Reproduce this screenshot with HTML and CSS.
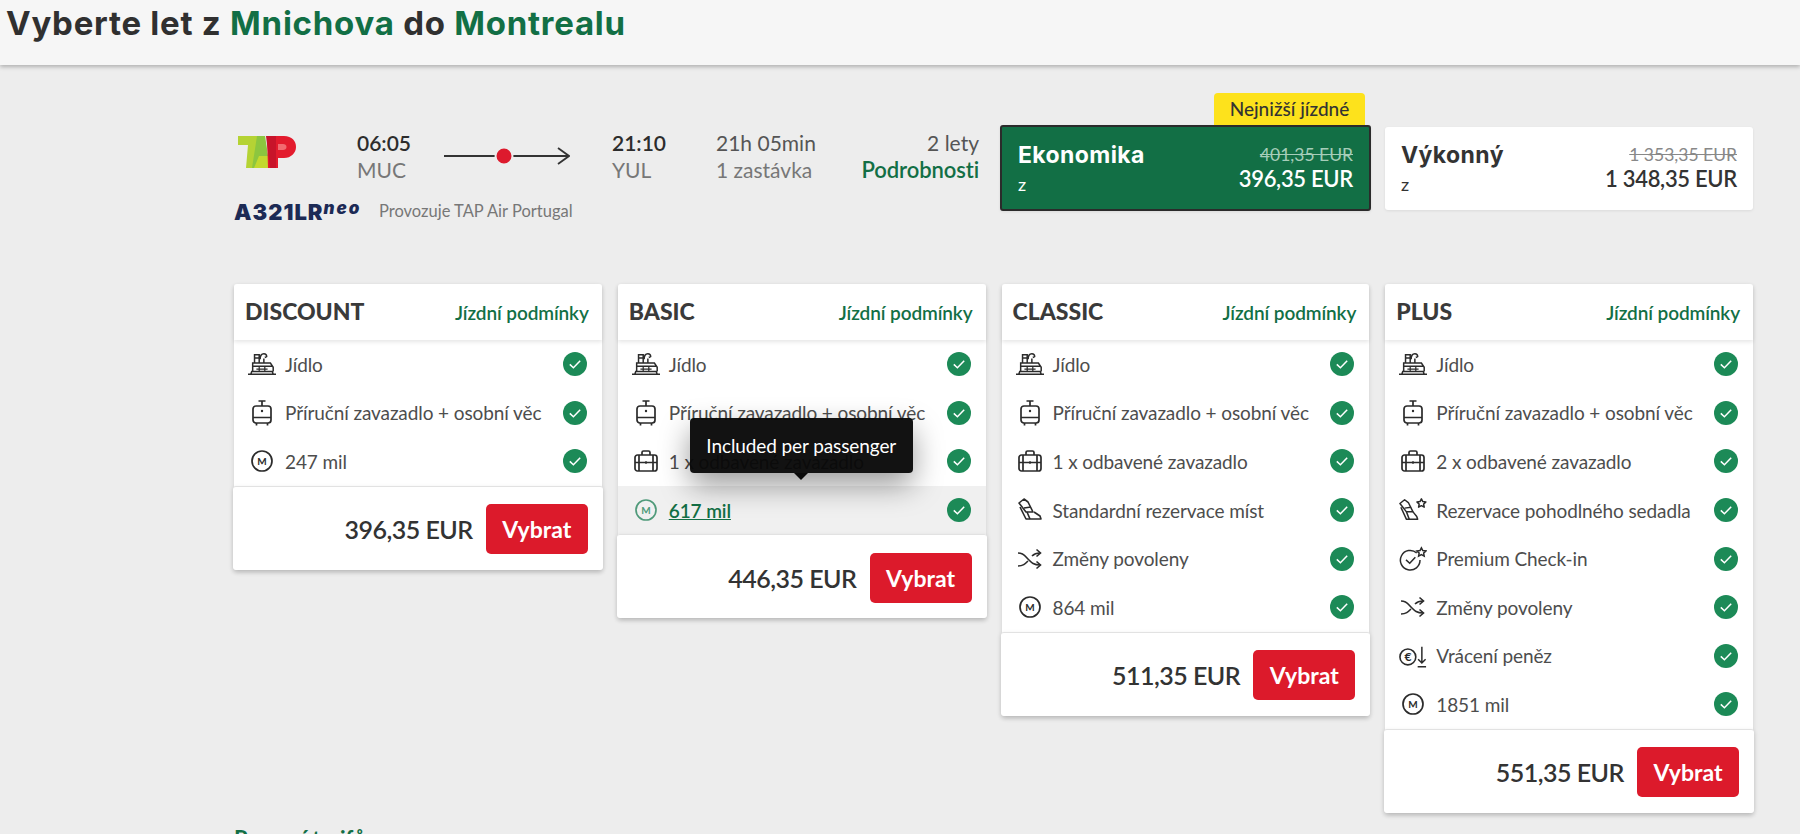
FILE: index.html
```html
<!DOCTYPE html>
<html lang="cs">
<head>
  <meta charset="UTF-8">
  <meta name="viewport" content="width=device-width, initial-scale=1.0">
  <title>Vyberte let</title>
  <link rel="stylesheet" href="styles.css">
</head>
<body>

  <!-- Ikony -->
  <svg class="sprite" xmlns="http://www.w3.org/2000/svg">
    <symbol id="i-check" viewBox="0 0 24 24">
      <circle cx="12" cy="12" r="12" fill="#1c8a57"/>
      <path d="M6.8 12.4l3.6 3.4 6.8-7" fill="none" stroke="#fff" stroke-width="1.5"/>
    </symbol>
    <symbol id="i-meal" viewBox="0 0 30 28">
      <g fill="none" stroke="currentColor" stroke-width="1.6">
        <path d="M0 25h30M3 25l1-3h22l1 3M5 22v-9h19l3 4.5V22M5 16.5h21"/>
        <path d="M7 13V4h5v9M7 7.5h5M13 9c0-3 1-6 4-6 2 0 3 1 3 3l-2 1M17 13V8"/>
        <path d="M9 19.5h12M12 17v5M18 17v5" stroke-width="1.3"/>
      </g>
    </symbol>
    <symbol id="i-trolley" viewBox="0 0 28 28">
      <g fill="none" stroke="currentColor" stroke-width="1.7">
        <path d="M10.5 2h7M14 2v5"/>
        <rect x="5" y="7" width="18" height="17" rx="3"/>
        <path d="M5 18.5h18M8.5 24v2.5M19.5 24v2.5"/>
      </g>
      <circle cx="14" cy="12" r="1.2" fill="currentColor"/>
    </symbol>
    <symbol id="i-bag" viewBox="0 0 28 28">
      <g fill="none" stroke="currentColor" stroke-width="1.7">
        <rect x="3" y="8" width="22" height="16" rx="2.5"/>
        <path d="M10 8V5.5A1.5 1.5 0 0 1 11.5 4h5A1.5 1.5 0 0 1 18 5.5V8M7 8v16M21 8v16M3 15.5h22"/>
      </g>
      <circle cx="14" cy="15.5" r="1.2" fill="currentColor"/>
    </symbol>
    <symbol id="i-miles" viewBox="0 0 28 28">
      <circle cx="14" cy="14" r="10" fill="none" stroke="currentColor" stroke-width="1.7"/>
      <text x="14" y="17.5" text-anchor="middle" class="icon-letter">M</text>
    </symbol>
    <symbol id="i-seat" viewBox="0 0 28 28">
      <g fill="none" stroke="currentColor" stroke-width="1.6" stroke-linejoin="round">
        <path d="M3 7l5-4 4 3 5 10h-7z"/>
        <path d="M4 11l6 12h15l-1-3-6-4"/>
        <path d="M11 16l3 7M8 12l7-1"/>
      </g>
    </symbol>
    <symbol id="i-shuffle" viewBox="0 0 28 28">
      <g fill="none" stroke="currentColor" stroke-width="1.6">
        <path d="M2 8c6 0 7 3 10 6s5 6 12 6M2 21c5 0 7-2 10-5M16 11c2-2 4-3 8-3"/>
        <path d="M20.5 4.5L24.5 8l-4 3.5M20.5 16.5l4 3.5-4 3.5"/>
      </g>
    </symbol>
    <symbol id="i-seat-star" viewBox="0 0 30 28">
      <g fill="none" stroke="currentColor" stroke-width="1.6" stroke-linejoin="round">
        <path d="M1 7l5-4 4 3 5 10H8z"/>
        <path d="M2 11l6 13h12l-1-3-4-5"/>
        <path d="M8 16l3 8M6 12l7-1"/>
        <path d="M24 2l1.5 3 3.3.4-2.4 2.3.6 3.3-3-1.6-3 1.6.6-3.3-2.4-2.3 3.3-.4z"/>
      </g>
    </symbol>
    <symbol id="i-checkin" viewBox="0 0 30 28">
      <g fill="none" stroke="currentColor" stroke-width="1.6">
        <path d="M19 7.5A10.5 10.5 0 1 0 22.5 15"/>
        <path d="M7.5 15l4 3.5 6-6.5"/>
        <path d="M24 2l1.5 3 3.3.4-2.4 2.3.6 3.3-3-1.6-3 1.6.6-3.3-2.4-2.3 3.3-.4z"/>
      </g>
    </symbol>
    <symbol id="i-refund" viewBox="0 0 30 28">
      <circle cx="9.5" cy="15" r="8.5" fill="none" stroke="currentColor" stroke-width="1.7"/>
      <text x="9.5" y="19.5" text-anchor="middle" class="icon-letter-big">€</text>
      <path d="M24.5 4v17.5M20.5 17.5l4 4 4-4M20 25.5h9" fill="none" stroke="currentColor" stroke-width="1.6"/>
    </symbol>
  </svg>

  <header class="page-head">
    <h1>Vyberte let z <span>Mnichova</span> do <span>Montrealu</span></h1>
  </header>

  <main class="content">

    <!-- Radek s letem -->
    <section class="flight">
      <div class="flight-info">
        <div class="flight-top">
          <div class="flight-logo">
            <svg width="58" height="33" viewBox="0 0 58 33" aria-label="TAP">
              <path d="M0 0h27v9h-8l-2 23H8l2-23H0z" fill="#b5d334"/>
              <path d="M19 0h8l5 32H14z" fill="#8cc63f"/>
              <path d="M21 20h9l2 12H16z" fill="#c3d92f"/>
              <path d="M29 0h17c8 0 12 5 12 11s-5 11-12 11h-6v10H30z" fill="#e31b2d"/>
              <path d="M28 0h10v32h-6z" fill="#c8142a"/>
              <path d="M40 8h5c2 0 3.5 1.2 3.5 3s-1.5 3-3.5 3h-5z" fill="#f26a70"/>
            </svg>
          </div>
          <div class="time-cell">
            <strong>06:05</strong>
            <span>MUC</span>
          </div>
          <div class="route">
            <svg width="126" height="20" viewBox="0 0 126 20">
              <path d="M0 10h125M114 2l11 8-11 8" fill="none" stroke="#333" stroke-width="1.8"/>
              <circle cx="60" cy="10" r="8.5" fill="#dd1a2d" stroke="#ededed" stroke-width="2"/>
            </svg>
          </div>
          <div class="time-cell arrival">
            <strong>21:10</strong>
            <span>YUL</span>
          </div>
          <div class="duration">
            <div>21h 05min</div>
            <span>1 zastávka</span>
          </div>
          <div class="stops">
            <div>2 lety</div>
            <a href="#">Podrobnosti</a>
          </div>
        </div>
        <div class="flight-bottom">
          <span class="aircraft">A321LR<em>neo</em></span>
          <span class="operator">Provozuje TAP Air Portugal</span>
        </div>
      </div>

      <div class="cabin cabin-active">
        <div class="cabin-tag">Nejnižší jízdné</div>
        <div>
          <div class="cabin-name">Ekonomika</div>
          <div class="cabin-from">z</div>
        </div>
        <div class="cabin-price">
          <s>401,35 EUR</s>
          <div>396,35 EUR</div>
        </div>
      </div>

      <div class="cabin">
        <div>
          <div class="cabin-name">Výkonný</div>
          <div class="cabin-from">z</div>
        </div>
        <div class="cabin-price">
          <s>1 353,35 EUR</s>
          <div>1 348,35 EUR</div>
        </div>
      </div>
    </section>

    <!-- Tarify -->
    <section class="fares">

      <article class="fare">
        <div class="fare-head"><h3>DISCOUNT</h3><a href="#">Jízdní podmínky</a></div>
        <ul class="fare-list">
          <li><svg class="ico"><use href="#i-meal"/></svg>Jídlo<svg class="ok"><use href="#i-check"/></svg></li>
          <li><svg class="ico"><use href="#i-trolley"/></svg>Příruční zavazadlo + osobní věc<svg class="ok"><use href="#i-check"/></svg></li>
          <li><svg class="ico"><use href="#i-miles"/></svg>247 mil<svg class="ok"><use href="#i-check"/></svg></li>
        </ul>
        <div class="fare-foot"><span>396,35 EUR</span><button class="pick">Vybrat</button></div>
      </article>

      <article class="fare">
        <div class="fare-head"><h3>BASIC</h3><a href="#">Jízdní podmínky</a></div>
        <ul class="fare-list">
          <li><svg class="ico"><use href="#i-meal"/></svg>Jídlo<svg class="ok"><use href="#i-check"/></svg></li>
          <li><svg class="ico"><use href="#i-trolley"/></svg>Příruční zavazadlo + osobní věc<svg class="ok"><use href="#i-check"/></svg></li>
          <li><svg class="ico"><use href="#i-bag"/></svg>1 x odbavené zavazadlo<svg class="ok"><use href="#i-check"/></svg></li>
          <li class="hovered">
            <div class="tooltip">Included per passenger</div>
            <svg class="ico"><use href="#i-miles"/></svg><a href="#">617 mil</a><svg class="ok"><use href="#i-check"/></svg>
          </li>
        </ul>
        <div class="fare-foot"><span>446,35 EUR</span><button class="pick">Vybrat</button></div>
      </article>

      <article class="fare">
        <div class="fare-head"><h3>CLASSIC</h3><a href="#">Jízdní podmínky</a></div>
        <ul class="fare-list">
          <li><svg class="ico"><use href="#i-meal"/></svg>Jídlo<svg class="ok"><use href="#i-check"/></svg></li>
          <li><svg class="ico"><use href="#i-trolley"/></svg>Příruční zavazadlo + osobní věc<svg class="ok"><use href="#i-check"/></svg></li>
          <li><svg class="ico"><use href="#i-bag"/></svg>1 x odbavené zavazadlo<svg class="ok"><use href="#i-check"/></svg></li>
          <li><svg class="ico"><use href="#i-seat"/></svg>Standardní rezervace míst<svg class="ok"><use href="#i-check"/></svg></li>
          <li><svg class="ico"><use href="#i-shuffle"/></svg>Změny povoleny<svg class="ok"><use href="#i-check"/></svg></li>
          <li><svg class="ico"><use href="#i-miles"/></svg>864 mil<svg class="ok"><use href="#i-check"/></svg></li>
        </ul>
        <div class="fare-foot"><span>511,35 EUR</span><button class="pick">Vybrat</button></div>
      </article>

      <article class="fare">
        <div class="fare-head"><h3>PLUS</h3><a href="#">Jízdní podmínky</a></div>
        <ul class="fare-list">
          <li><svg class="ico"><use href="#i-meal"/></svg>Jídlo<svg class="ok"><use href="#i-check"/></svg></li>
          <li><svg class="ico"><use href="#i-trolley"/></svg>Příruční zavazadlo + osobní věc<svg class="ok"><use href="#i-check"/></svg></li>
          <li><svg class="ico"><use href="#i-bag"/></svg>2 x odbavené zavazadlo<svg class="ok"><use href="#i-check"/></svg></li>
          <li><svg class="ico"><use href="#i-seat-star"/></svg>Rezervace pohodlného sedadla<svg class="ok"><use href="#i-check"/></svg></li>
          <li><svg class="ico"><use href="#i-checkin"/></svg>Premium Check-in<svg class="ok"><use href="#i-check"/></svg></li>
          <li><svg class="ico"><use href="#i-shuffle"/></svg>Změny povoleny<svg class="ok"><use href="#i-check"/></svg></li>
          <li><svg class="ico"><use href="#i-refund"/></svg>Vrácení peněz<svg class="ok"><use href="#i-check"/></svg></li>
          <li><svg class="ico"><use href="#i-miles"/></svg>1851 mil<svg class="ok"><use href="#i-check"/></svg></li>
        </ul>
        <div class="fare-foot"><span>551,35 EUR</span><button class="pick">Vybrat</button></div>
      </article>

    </section>

    <div class="next-link"><a href="#">Pomocí tarifů</a></div>
  </main>

</body>
</html>
```

FILE: styles.css
```css
/* Estilo geral */
html, body {
  height: 100%;
  overflow: hidden;
}

body {
  margin: 0;
  background-color: #ededed;
  font-family: "Lato", Arial, sans-serif;
  color: #333;
}

a {
  color: #126f45;
  text-decoration: none;
}

.sprite {
  display: none;
}

.icon-letter {
  font-family: "Lato", sans-serif;
  font-size: 10px;
  font-weight: 700;
  fill: currentColor;
}

.icon-letter-big {
  font-family: "Lato", sans-serif;
  font-size: 13px;
  font-weight: 700;
  fill: currentColor;
}

/* Cabecalho */
.page-head {
  height: 65px;
  background-color: #f6f6f6;
  box-shadow: 0 2px 4px rgba(0, 0, 0, 0.25);
  padding-left: 6px;
}

.page-head h1 {
  margin: 0;
  padding-top: 3px;
  font-family: "Inter", Arial, sans-serif;
  font-size: 33px;
  line-height: 40px;
  font-weight: 700;
  letter-spacing: 0.75px;
  color: #303030;
}

.page-head h1 span {
  color: #126f45;
}

.content {
  padding: 60px 47px 0 234px;
}

/* Linha do voo */
.flight {
  display: flex;
  align-items: flex-start;
  gap: 14px;
}

.flight-info {
  width: 752px;
  padding-top: 4px;
}

.flight-top {
  display: grid;
  grid-template-columns: 123px 87px 126px 146px 1fr auto;
  height: 54px;
}

.flight-logo {
  padding: 7px 0 0 4px;
}

.time-cell,
.duration,
.stops {
  font-size: 21px;
  line-height: 27px;
}

.time-cell strong {
  display: block;
  font-weight: 600;
  color: #2c2c2c;
}

.time-cell span,
.duration span {
  display: block;
  color: #777;
}

.time-cell.arrival {
  padding-left: 42px;
}

.route {
  padding-top: 17px;
}

.duration div {
  color: #555;
}

.stops {
  text-align: right;
  padding-right: 7px;
  color: #555;
}

.stops a {
  font-size: 22px;
  font-weight: 600;
  letter-spacing: -0.1px;
}

.flight-bottom {
  display: flex;
  align-items: center;
  margin-top: 15px;
  height: 26px;
}

.aircraft {
  width: 145px;
  font-family: "Inter", Arial, sans-serif;
  font-size: 22px;
  font-weight: 900;
  letter-spacing: 1px;
  white-space: nowrap;
  color: #1c2a55;
}

.aircraft em {
  font-size: 17px;
  letter-spacing: 2px;
  vertical-align: 6px;
}

.operator {
  font-size: 16.5px;
  color: #777;
}

/* Cabines */
.cabin {
  position: relative;
  flex: 1;
  display: flex;
  justify-content: space-between;
  height: 83px;
  margin-top: 2px;
  padding: 0 16px;
  background-color: #fff;
  border-radius: 3px;
  box-shadow: 0 1px 3px rgba(0, 0, 0, 0.08);
}

.cabin-active {
  flex: none;
  width: 371px;
  box-sizing: border-box;
  height: 86px;
  margin-top: 0;
  background-color: #126f45;
  border: 2px solid #2b2b2b;
  color: #fff;
}

.cabin-tag {
  position: absolute;
  top: -34px;
  right: 4px;
  width: 151px;
  height: 32px;
  line-height: 32px;
  text-align: center;
  background-color: #fde21c;
  border-radius: 4px 4px 0 0;
  font-size: 19px;
  font-weight: 500;
  color: #333;
}

.cabin-name {
  margin-top: 14px;
  font-family: "Inter", Arial, sans-serif;
  font-size: 23px;
  line-height: 28px;
  font-weight: 700;
  letter-spacing: 0.4px;
}

.cabin-from {
  font-size: 18px;
  line-height: 24px;
  margin-top: 3px;
}

.cabin-price {
  margin-top: 18px;
  text-align: right;
  font-size: 22px;
  line-height: 28px;
  font-weight: 600;
  letter-spacing: -0.3px;
}

.cabin-price s {
  display: block;
  font-size: 17.5px;
  line-height: 20px;
  font-weight: 400;
  letter-spacing: 0;
  color: #888;
}

.cabin-active .cabin-price s {
  color: #a6cdb9;
}

/* Tarifas */
.fares {
  display: grid;
  grid-template-columns: repeat(4, 1fr);
  gap: 16px;
  align-items: start;
  margin-top: 60px;
}

.fare {
  background-color: #fff;
  border-radius: 3px;
  box-shadow: 0 2px 5px rgba(0, 0, 0, 0.12);
}

.fare-head {
  position: relative;
  display: flex;
  justify-content: space-between;
  align-items: center;
  height: 56px;
  padding: 0 13px 0 11px;
  box-shadow: 0 2px 4px rgba(0, 0, 0, 0.1);
}

.fare-head h3 {
  margin: 0 0 3px;
  font-size: 23px;
  font-weight: 900;
  color: #3a3a3a;
}

.fare-head a {
  font-size: 19px;
  font-weight: 600;
  letter-spacing: -0.1px;
}

.fare-list {
  list-style: none;
  margin: 0;
  padding: 0;
}

.fare-list li {
  position: relative;
  display: flex;
  align-items: center;
  height: 48.6px;
  padding: 0 15px 0 14px;
  font-size: 19px;
  letter-spacing: -0.1px;
  color: #4d4d4d;
}

.ico {
  flex: none;
  width: 28px;
  height: 28px;
  margin-right: 9px;
  color: #2b2b2b;
}

.ok {
  flex: none;
  width: 24px;
  height: 24px;
  margin-left: auto;
}

/* Linha com o mouse em cima */
.fare-list li.hovered {
  background-color: #f0f0f0;
}

.hovered a {
  font-weight: 600;
  text-decoration: underline;
}

.hovered .ico {
  color: #4f9a7a;
}

.tooltip {
  position: absolute;
  bottom: calc(100% + 13px);
  left: 72px;
  width: 223px;
  height: 55px;
  line-height: 55px;
  text-align: center;
  background-color: rgba(8, 8, 8, 0.96);
  border-radius: 4px;
  box-shadow: 0 12px 30px rgba(0, 0, 0, 0.4);
  color: #fff;
  font-size: 19px;
  z-index: 2;
}

.tooltip::after {
  content: "";
  position: absolute;
  top: 100%;
  left: 50%;
  margin-left: -7px;
  border: 7px solid transparent;
  border-top-color: #0a0a0a;
  border-bottom-width: 0;
}

.fare-foot {
  position: relative;
  display: flex;
  justify-content: flex-end;
  align-items: center;
  gap: 13px;
  height: 84px;
  margin: 0 -1px;
  padding: 2px 15px 0 14px;
  background-color: #fff;
  border-top: 1px solid #e2e2e2;
  border-radius: 3px;
  box-shadow: 0 2px 5px rgba(0, 0, 0, 0.14);
  box-sizing: border-box;
  font-size: 25px;
  font-weight: 600;
  letter-spacing: -0.5px;
  color: #333;
}

.pick {
  width: 102px;
  height: 50px;
  padding: 0;
  background-color: #dc1a2b;
  border: none;
  border-radius: 5px;
  color: #fff;
  font-family: inherit;
  font-size: 23px;
  font-weight: 700;
  cursor: pointer;
}

.next-link {
  margin-top: 12px;
  font-size: 22px;
  font-weight: 700;
}
```
